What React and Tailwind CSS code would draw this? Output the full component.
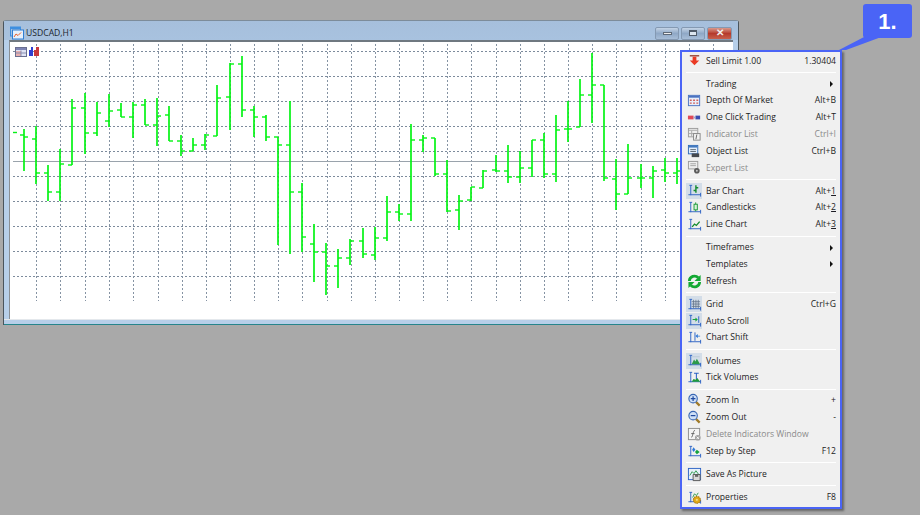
import { Fragment } from 'react'

// x, high, low, open, close
const BARS = [
  [24, 130, 172, 136, 138], [36, 127, 185, 140, 174], [48, 166, 202, 174, 193], [60, 150, 202, 193, 165],
  [72, 100, 166, 166, 109], [85, 94, 155, 109, 134], [97, 103, 137, 134, 114], [109, 95, 128, 122, 112],
  [121, 104, 118, 111, 118], [133, 103, 139, 118, 106], [145, 100, 126, 106, 126], [157, 99, 147, 126, 117],
  [169, 107, 142, 116, 142], [181, 136, 157, 142, 152], [193, 139, 152, 152, 146], [205, 135, 151, 146, 136],
  [217, 86, 137, 137, 99], [230, 64, 131, 98, 65], [242, 57, 118, 65, 111], [254, 107, 138, 111, 118],
  [266, 116, 142, 118, 138], [278, 138, 246, 138, 146], [290, 102, 255, 146, 193], [302, 184, 253, 193, 238],
  [314, 225, 283, 245, 253], [326, 244, 296, 253, 267], [338, 250, 289, 267, 259], [350, 240, 266, 259, 242],
  [363, 229, 259, 242, 255], [375, 228, 261, 256, 239], [387, 197, 242, 239, 213], [399, 205, 222, 213, 215],
  [411, 125, 222, 215, 141], [423, 136, 153, 141, 139], [435, 139, 177, 139, 175], [447, 161, 213, 175, 212],
  [459, 196, 231, 211, 202], [471, 188, 202, 201, 188], [483, 171, 189, 189, 172], [496, 156, 173, 171, 172],
  [508, 146, 184, 172, 178], [520, 152, 184, 178, 169], [532, 141, 178, 169, 141], [544, 134, 179, 141, 175],
  [556, 116, 183, 175, 131], [568, 102, 143, 130, 130], [580, 80, 128, 128, 96], [592, 54, 124, 96, 86],
  [604, 86, 182, 86, 179], [616, 160, 211, 180, 195], [628, 145, 195, 195, 179], [641, 165, 189, 179, 179],
  [653, 167, 199, 179, 172], [665, 159, 183, 171, 174], [677, 159, 185, 174, 172],
]
const H_LINES = [52, 77, 102, 127, 152, 177, 202, 227, 252, 277]
const V_LINES = [36, 60, 85, 109, 133, 158, 182, 206, 230, 254, 278, 302, 327, 351, 375, 399, 423, 447, 471, 496, 520, 544, 568, 592, 616, 641, 665, 689, 713]

function Chart() {
  return (
    <svg viewBox="10 43 723 277" className="block w-full h-full">
      {H_LINES.map(y => (
        <line key={y} x1="13" x2="732" y1={y + 0.5} y2={y + 0.5} stroke="#7d8b9c" strokeDasharray="2 2" />
      ))}
      {V_LINES.map(x => (
        <line key={x} x1={x + 0.5} x2={x + 0.5} y1="45" y2="302" stroke="#8593a3" strokeDasharray="2 2" />
      ))}
      <line x1="13" x2="732" y1="162.5" y2="162.5" stroke="#9aa3ac" />
      <line x1="13" x2="17" y1="133.5" y2="133.5" stroke="#06f018" strokeWidth="1.4" />
      {BARS.map(([x, hi, lo, open, close]) => (
        <g key={x} stroke="#04f414">
          <line x1={x} x2={x} y1={hi} y2={lo} strokeWidth="1.7" />
          <line x1={x - 4} x2={x} y1={open} y2={open} strokeWidth="1.4" />
          <line x1={x} x2={x + 4} y1={close} y2={close} strokeWidth="1.4" />
        </g>
      ))}
    </svg>
  )
}

const Axes = () => (
  <path d="M2.500 2.500h3M4 2.500v10.500M1.500 12.500h13M14.500 10.500v4" fill="none" stroke="#2c62c4" strokeWidth="1" />
)

const Ico = ({ children, active }) => (
  <span className={`flex h-[16px] w-[16px] items-center justify-center ${active ? 'bg-[#d3dde8]' : ''}`}>
    <svg viewBox="0 0 16 16" className="h-[15px] w-[15px]">{children}</svg>
  </span>
)

const ICONS = {
  sell: <Ico><path d="M3 3h10" stroke="#8a2c1c" strokeWidth="1.300" /><path d="M6 4h4v4h3l-5 5-5-5h3z" fill="#ea3a24" /></Ico>,
  depth: (
    <Ico>
      <rect x="1.500" y="2.500" width="12" height="11" fill="#e8eefa" stroke="#4a72c0" />
      <path d="M2 3h11v2H2z" fill="#4a72c0" />
      <path d="M3 7h2v1.500H3zM6.500 7h2v1.500h-2zM10 7h2v1.500h-2zM3 10h2v1.500H3zM6.500 10h2v1.500h-2zM10 10h2v1.500h-2z" fill="#d0605c" />
    </Ico>
  ),
  oneClick: <Ico><path d="M1 6h6v4H1z" fill="#e04a58" /><path d="M9 6h5v4H9z" fill="#3a4cb0" /><path d="M7 7h2v2H7z" fill="#a6a0c8" /></Ico>,
  indicator: (
    <Ico>
      <rect x="1.500" y="1.500" width="10" height="9" fill="#eee" stroke="#9a9a9a" />
      <path d="M2 3.500h9M5 4v6M2 7h9" stroke="#a8a8a8" />
      <rect x="7" y="7" width="7" height="7" fill="#f2f2f2" stroke="#888" />
      <path d="M9.500 13l1-5" stroke="#666" />
    </Ico>
  ),
  object: (
    <Ico>
      <rect x="1.500" y="1.500" width="10" height="9" fill="#e4eefb" stroke="#2f6bb8" />
      <path d="M2 3h9" stroke="#2f6bb8" strokeWidth="1.500" />
      <path d="M3.500 6h6M3.500 8h6" stroke="#5a6672" />
      <path d="M5 10h8v4H5z" fill="#45494e" />
    </Ico>
  ),
  expert: (
    <Ico>
      <rect x="1.500" y="1.500" width="10" height="8" fill="#eee" stroke="#9a9a9a" />
      <path d="M3.500 4h6M3.500 6h6" stroke="#a4a4a4" />
      <circle cx="10.500" cy="11.500" r="3" fill="#5c5c5c" />
      <circle cx="10.500" cy="11.500" r="1" fill="#c8c8c8" />
    </Ico>
  ),
  bar: <Ico active><Axes /><path d="M9.500 2.500v8M7 8h2.500M9.500 5H12" stroke="#128a2c" strokeWidth="1.500" fill="none" /></Ico>,
  candle: <Ico><Axes /><rect x="7.500" y="4.500" width="3.500" height="6" fill="#d8f4d8" stroke="#1d9a38" /><path d="M9.250 2.500v2M9.250 10.500v1.500" stroke="#1d9a38" /></Ico>,
  line: <Ico><Axes /><path d="M5.500 10.500l2.500-3 2 1.500 3.500-4" fill="none" stroke="#128a2c" strokeWidth="1.400" /></Ico>,
  grid: (
    <Ico active>
      <Axes />
      <path d="M7 3v9M9.500 3v9M12 3v9M5 5h9M5 7.500h9M5 10h9" stroke="#5c6e84" strokeWidth="0.800" fill="none" />
    </Ico>
  ),
  autoScroll: <Ico active><Axes /><path d="M12.500 3.500v7" stroke="#2c62c4" /><path d="M6 6.500h3V4.800l2.500 2.200L9 9.200V7.500H6z" fill="#16a33c" /></Ico>,
  chartShift: <Ico><Axes /><path d="M8.500 2.500v9" stroke="#2c62c4" /><path d="M14 6h-2.500V4.300L9 6.500l2.500 2.200V7H14z" fill="#2f78d8" /></Ico>,
  volumes: <Ico active><Axes /><path d="M5 12l2.500-5 1.500 2 1.500-3 3.500 6z" fill="#2c9a4a" /><path d="M5.500 4h8" stroke="#b8c8d8" /></Ico>,
  tickVolumes: <Ico><Axes /><path d="M5 12.500l2-3 2 1 2-2 3 4z" fill="#1f9a3c" /><path d="M7.500 3.500h5M10 3.500v6" stroke="#2c62c4" strokeWidth="1.100" /></Ico>,
  zoomIn: (
    <Ico>
      <path d="M9.500 9.500l4 4" stroke="#a07a28" strokeWidth="2.400" />
      <circle cx="6.500" cy="6" r="4.500" fill="#cfe0f6" stroke="#3a68b4" strokeWidth="1.200" />
      <path d="M4 6h5M6.500 3.500v5" stroke="#1f4aa0" strokeWidth="1.300" />
    </Ico>
  ),
  zoomOut: (
    <Ico>
      <path d="M9.500 9.500l4 4" stroke="#a07a28" strokeWidth="2.400" />
      <circle cx="6.500" cy="6" r="4.500" fill="#cfe0f6" stroke="#3a68b4" strokeWidth="1.200" />
      <path d="M4 6h5" stroke="#1f4aa0" strokeWidth="1.300" />
    </Ico>
  ),
  del: (
    <Ico>
      <rect x="1.500" y="1.500" width="12" height="12" fill="#f4f4f4" stroke="#8c8c8c" />
      <path d="M4.500 11c2 0 1.500-7 4-7.500M4.500 7h3.500" fill="none" stroke="#666" />
      <circle cx="11.500" cy="11.500" r="3" fill="#a2a2a2" />
      <path d="M10.300 10.300l2.400 2.400M12.700 10.300l-2.400 2.400" stroke="#fff" />
    </Ico>
  ),
  step: <Ico><Axes /><path d="M7 3.500l2 2.500-2 2.500L5.500 6z" fill="#2f78d8" /><path d="M10.500 6l3 2.500-3 2.500-2-2.500z" fill="#16a33c" /></Ico>,
  save: (
    <Ico>
      <rect x="1.500" y="1.500" width="13" height="12" fill="#e8f0fa" stroke="#2c62c4" />
      <path d="M3 9l2.500-4 2 2 2-3 3 4" fill="none" stroke="#2c9a4a" />
      <path d="M6.500 8h7.500v6.500H6.500z" fill="#d8d8d8" stroke="#555" />
      <path d="M8.500 8.500h3.500v2H8.500z" fill="#666" />
    </Ico>
  ),
  properties: (
    <Ico>
      <Axes />
      <path d="M6 8l2-4 2 2 2-3" fill="none" stroke="#2c9a4a" />
      <circle cx="10.500" cy="10.500" r="3.700" fill="#e0a818" stroke="#a87a10" strokeDasharray="1.500 0.800" strokeWidth="1.200" />
      <circle cx="10.500" cy="10.500" r="1.200" fill="#f4dc80" />
    </Ico>
  ),
  refresh: (
    <Ico>
      <path d="M2.500 7.500a5.500 5.500 0 0 1 9.500-3.500" fill="none" stroke="#12a832" strokeWidth="3" />
      <path d="M14.500 1v6.500H8z" fill="#12a832" />
      <path d="M13.500 8.500a5.500 5.500 0 0 1-9.500 3.500" fill="none" stroke="#12a832" strokeWidth="3" />
      <path d="M1.500 15V8.500H8z" fill="#12a832" />
    </Ico>
  ),
}

const MENU = [
  { label: 'Sell Limit 1.00', right: '1.30404', icon: 'sell' },
  'sep',
  { label: 'Trading', sub: true },
  { label: 'Depth Of Market', right: 'Alt+B', icon: 'depth' },
  { label: 'One Click Trading', right: 'Alt+T', icon: 'oneClick' },
  { label: 'Indicator List', right: 'Ctrl+I', icon: 'indicator', disabled: true },
  { label: 'Object List', right: 'Ctrl+B', icon: 'object' },
  { label: 'Expert List', icon: 'expert', disabled: true },
  'sep',
  { label: 'Bar Chart', right: 'Alt+', key: '1', icon: 'bar' },
  { label: 'Candlesticks', right: 'Alt+', key: '2', icon: 'candle' },
  { label: 'Line Chart', right: 'Alt+', key: '3', icon: 'line' },
  'sep',
  { label: 'Timeframes', sub: true },
  { label: 'Templates', sub: true },
  { label: 'Refresh', icon: 'refresh' },
  'sep',
  { label: 'Grid', right: 'Ctrl+G', icon: 'grid' },
  { label: 'Auto Scroll', icon: 'autoScroll' },
  { label: 'Chart Shift', icon: 'chartShift' },
  'sep',
  { label: 'Volumes', icon: 'volumes' },
  { label: 'Tick Volumes', icon: 'tickVolumes' },
  'sep',
  { label: 'Zoom In', right: '+', icon: 'zoomIn' },
  { label: 'Zoom Out', right: '-', icon: 'zoomOut' },
  { label: 'Delete Indicators Window', icon: 'del', disabled: true },
  { label: 'Step by Step', right: 'F12', icon: 'step' },
  'sep',
  { label: 'Save As Picture', icon: 'save' },
  'sep',
  { label: 'Properties', right: 'F8', icon: 'properties' },
]

function MenuRow({ item }) {
  return (
    <div className={`flex h-[16.77px] items-center pl-[4px] pr-[4px] ${item.disabled ? 'text-[#8a8a8a]' : 'text-[#1c1c24]'}`}>
      <span className="flex w-[20px] shrink-0">{item.icon && ICONS[item.icon]}</span>
      <span className="flex-1 whitespace-nowrap">{item.label}</span>
      {item.right && (
        <span className="whitespace-nowrap">
          {item.right}
          {item.key && <span className="underline">{item.key}</span>}
        </span>
      )}
      {item.sub && <span className="mr-[3px] h-0 w-0 border-y-[3px] border-l-[3px] border-y-transparent border-l-[#111]" />}
    </div>
  )
}

function ContextMenu() {
  return (
    <div className="absolute left-[680px] top-[50px] h-[459px] w-[162px] border-2 border-[#4a64f6] bg-[#f0f0f0] pt-[0.5px] font-['Open_Sans',sans-serif] text-[8.6px] leading-none shadow-[2px_2px_2px_rgba(60,60,60,0.6)]">
      {MENU.map((item, i) => (
        <Fragment key={i}>
          {item === 'sep' ? (
            <div className="mx-[4px] flex h-[6.35px] items-center">
              <div className="h-[1px] w-full border-b border-b-white bg-[#c4c4c4]" />
            </div>
          ) : (
            <MenuRow item={item} />
          )}
        </Fragment>
      ))}
    </div>
  )
}

const WinButton = ({ className, children }) => (
  <div className={`flex h-[13px] items-center justify-center rounded-[2px] border border-[#8499b2] ${className}`}>{children}</div>
)

function ChartWindow() {
  return (
    <div className="absolute left-[3px] top-[20px] flex h-[305px] w-[736px] flex-col rounded-t-[3px] border border-b-0 border-[#4a545c] border-t-[#7d8c9a] bg-[#b7cfe9]">
      <div className="flex h-[20px] items-center bg-gradient-to-b from-[#a6bfdc] to-[#a8c2df] pl-[6px] pr-[6px] pt-[5px]">
        <svg viewBox="0 0 14 14" className="mr-[2px] h-[14px] w-[14px]">
          <path d="M0.500 1h10v2h-10z" fill="#3f8fe0" />
          <rect x="0.500" y="1" width="10" height="9" fill="none" stroke="#3f8fe0" />
          <rect x="2.500" y="4" width="11" height="9" fill="#e6f0fb" stroke="#2f7fd4" />
          <path d="M4 11l2-3 2 1.500 3-3" fill="none" stroke="#e8602c" />
        </svg>
        <span className="font-['Open_Sans',sans-serif] text-[8.6px] leading-none text-[#20262c]">USDCAD,H1</span>
        <div className="ml-auto flex gap-[2px]">
          <WinButton className="w-[24px] bg-gradient-to-b from-[#c4d4e6] via-[#8fa8c6] to-[#a8bed8]">
            <span className="h-[3px] w-[9px] border border-[#5f6a78] bg-[#eee]" />
          </WinButton>
          <WinButton className="w-[24px] bg-gradient-to-b from-[#c4d4e6] via-[#8fa8c6] to-[#a8bed8]">
            <span className="h-[6px] w-[8px] border border-[#4f5a68] border-t-2 bg-[#dde6ef]" />
          </WinButton>
          <WinButton className="w-[25px] border-[#8e4a44] bg-gradient-to-b from-[#d8988c] via-[#b53a2c] to-[#c8604c]">
            <span className="text-[10px] font-bold leading-none text-[#f0eeee] font-['Liberation_Sans',sans-serif]">✕</span>
          </WinButton>
        </div>
      </div>
      <div className="relative mx-[5px] h-[279px] border-t-2 border-l border-t-[#6f7880] border-l-[#8a8f94] bg-white">
        <div className="absolute left-[5px] top-[5px] flex gap-[1px]">
          <svg viewBox="0 0 12 10" className="h-[10px] w-[12px]">
            <rect x="0.500" y="0.500" width="11" height="9" fill="#dfe3f4" stroke="#6a6f90" />
            <path d="M1 1h10v2H1z" fill="#7d84b4" />
            <path d="M1 4h5v5H1z" fill="#e8b0b0" />
            <path d="M6 3.500V9M1 6h10" stroke="#8a8fb0" />
          </svg>
          <svg viewBox="0 0 12 10" className="h-[10px] w-[12px]">
            <path d="M1 3h2v-3h2v9H1z" fill="#2f3fd0" />
            <path d="M6 9V3h2V0h3v9z" fill="#c8383c" />
          </svg>
        </div>
        <Chart />
      </div>
      <div className="mt-auto h-[1px] bg-[#e4e8ec]" />
      <div className="h-[4px] bg-[#b7cfe9]" />
      <div className="h-[1px] bg-[#26858c]" />
    </div>
  )
}

export default function App() {
  return (
    <div className="relative h-[515px] w-[920px] overflow-hidden bg-[#a9a9a9]">
      <ChartWindow />
      <ContextMenu />
      {/* step callout */}
      <svg viewBox="835 30 55 25" className="absolute left-[835px] top-[30px] h-[25px] w-[55px]">
        <path d="M839 50L866 36H884L846 50z" fill="#4a64f6" />
      </svg>
      <div className="absolute left-[863px] top-[4px] flex h-[34px] w-[49px] items-center justify-center rounded-[3px] bg-[#4a64f6] font-['Liberation_Sans',sans-serif] text-[22px] font-bold text-white">
        1.
      </div>
    </div>
  )
}
